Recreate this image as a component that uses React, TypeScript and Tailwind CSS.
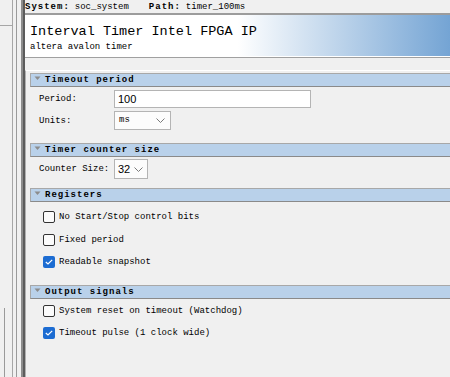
import React from "react";

const mono = { fontFamily: '"Liberation Mono", "DejaVu Sans Mono", monospace' };

function Tri() {
  return (
    <svg width="7" height="5" viewBox="0 0 7 5" className="absolute left-[3px] top-[2px]">
      <polygon points="0.5,0.5 6.5,0.5 3.5,4" fill="#8c8c8c" />
    </svg>
  );
}

function Header({ title }: { title: string }) {
  return (
    <div className="relative h-[14px] bg-[#b9d1ea] border-t border-b border-l border-t-[#a8a8a8] border-b-[#8a8a8a] border-l-[#a8a8a8] pl-[14px] flex items-end">
      <Tri />
      <span className="text-[9px] leading-[11px] font-bold tracking-[1px] text-black">{title}</span>
    </div>
  );
}

function Chevron() {
  return (
    <svg width="9" height="5" viewBox="0 0 9 5">
      <polyline points="0.5,0.5 4.5,4.5 8.5,0.5" fill="none" stroke="#7a7a7a" strokeWidth="1" />
    </svg>
  );
}

function Check({ checked, label }: { checked: boolean; label: string }) {
  return (
    <div className="h-[22.5px] flex items-center pl-[13px]">
      {checked ? (
        <div className="w-[12px] h-[12px] rounded-[2px] bg-[#1c6cd2] flex items-center justify-center">
          <svg width="8" height="6" viewBox="0 0 8 6">
            <polyline points="0.8,3 3,5 7.2,0.8" fill="none" stroke="white" strokeWidth="1.2" />
          </svg>
        </div>
      ) : (
        <div className="w-[12px] h-[12px] rounded-[2px] border border-[#333] bg-[#fbfbfb]" />
      )}
      <span className="ml-[4px] text-[9px] leading-[12px] text-black">{label}</span>
    </div>
  );
}

export default function App() {
  return (
    <div className="w-[450px] h-[377px] overflow-hidden bg-[#f0f0f0] flex text-black" style={mono}>
      {/* left strips */}
      <div className="w-[13px] h-full flex flex-col border-r border-[#a6a6a6]">
        <div className="h-[26px] border-b border-[#a6a6a6]" />
        <div className="flex-1 pl-[4px] pt-[282px]">
          <div className="w-px h-full bg-[#9a9a9a]" />
        </div>
      </div>
      <div className="w-[3px]" />
      <div className="w-px h-full bg-[#9a9a9a]" />
      <div className="w-[4px]" />
      <div className="w-[2px] h-full bg-[#8c8c8c]" />
      <div className="w-[2px] h-full bg-[#5c5c5c]" />

      {/* main */}
      <div className="flex-1 flex flex-col min-w-0">
        <div className="h-[13px] flex items-end text-[9px] leading-[11px] whitespace-nowrap">
          <span className="font-bold tracking-[1px]">System:</span>
          <span className="ml-[5px]">soc_system</span>
          <span className="ml-[20px] font-bold tracking-[1px]">Path:</span>
          <span className="ml-[5px]">timer_100ms</span>
        </div>
        <div
          className="h-[45px] border-t-2 border-b border-t-[#9c9c9c] border-b-[#a0a0a0] pl-[5px] pt-[9px] shadow-[inset_0_-1px_0_#ffffff]"
          style={{ background: "linear-gradient(to right, #ffffff 0%, #ffffff 50%, #74a4d4 100%)" }}
        >
          <div className="text-[13.5px] leading-[16px] whitespace-nowrap">Interval Timer Intel FPGA IP</div>
          <div className="text-[9px] leading-[12px] mt-[1px]">altera avalon timer</div>
        </div>
        <div className="h-[12px]" />
        <div className="flex-1 border-t border-l border-t-white border-l-[#b0b0b0] pl-[4px] pt-[2px]">
          <Header title="Timeout period" />
          <div className="pt-[3px] pl-[9px] grid grid-cols-[75px_1fr] gap-y-[3px] items-center text-[9px]">
            <span className="leading-[12px]">Period:</span>
            <div className="w-[197px] h-[18px] bg-white border border-[#b4b4b4] flex items-center pl-[3px]">
              <span className="text-[11px]" style={{ fontFamily: '"Liberation Sans", Arial, sans-serif' }}>100</span>
            </div>
            <span className="leading-[12px]">Units:</span>
            <div className="w-[57px] h-[19px] bg-[#fcfcfc] border border-[#b4b4b4] flex items-center justify-between pl-[4px] pr-[5px]">
              <span className="text-[9px]">ms</span>
              <Chevron />
            </div>
          </div>
          <div className="h-[13px]" />
          <Header title="Timer counter size" />
          <div className="pt-[2px] pl-[9px] grid grid-cols-[75px_1fr] items-center text-[9px]">
            <span className="leading-[12px] whitespace-nowrap">Counter Size:</span>
            <div className="w-[34px] h-[20px] bg-[#fcfcfc] border border-[#b4b4b4] flex items-center justify-between pl-[3px] pr-[4px]">
              <span className="text-[11px]" style={{ fontFamily: '"Liberation Sans", Arial, sans-serif' }}>32</span>
              <Chevron />
            </div>
          </div>
          <div className="h-[9px]" />
          <Header title="Registers" />
          <div className="pt-[4px]">
            <Check checked={false} label="No Start/Stop control bits" />
            <Check checked={false} label="Fixed period" />
            <Check checked={true} label="Readable snapshot" />
          </div>
          <div className="h-[11px]" />
          <Header title="Output signals" />
          <div className="pt-[1px]">
            <Check checked={false} label="System reset on timeout (Watchdog)" />
            <Check checked={true} label="Timeout pulse (1 clock wide)" />
          </div>
        </div>
      </div>
    </div>
  );
}
